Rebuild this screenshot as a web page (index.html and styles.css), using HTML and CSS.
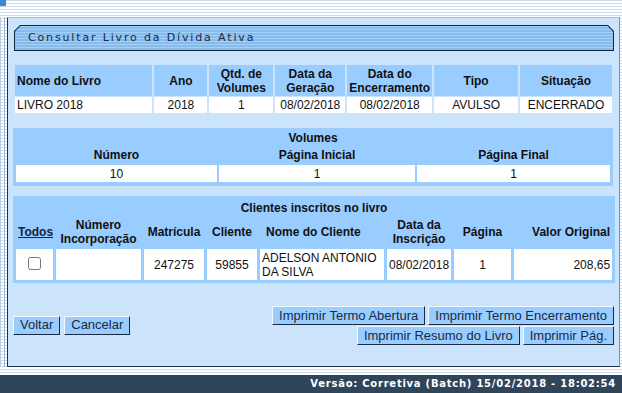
FILE: index.html
```html
<!DOCTYPE html>
<html lang="pt-BR">
<head>
    <meta charset="UTF-8">
    <title>Consultar Livro da Dívida Ativa</title>
    <link rel="stylesheet" href="styles.css">
</head>
<body>
    <div class="page">
        <div class="top-bar"><span class="top-mark"></span></div>
        <div class="main-row">
            <div class="side-strip"></div>
            <div class="panel">
                <div class="title-frame">
                    <div class="title-bar">Consultar Livro da Dívida Ativa</div>
                </div>

                <table class="grid grid-livro">
                    <colgroup>
                        <col style="width:138px"><col style="width:53px"><col style="width:64px">
                        <col style="width:70px"><col style="width:85px"><col style="width:84px"><col style="width:92px">
                    </colgroup>
                    <tr class="head">
                        <th class="left">Nome do Livro</th>
                        <th>Ano</th>
                        <th>Qtd. de<br>Volumes</th>
                        <th>Data da<br>Geração</th>
                        <th>Data do<br>Encerramento</th>
                        <th>Tipo</th>
                        <th>Situação</th>
                    </tr>
                    <tr class="data">
                        <td class="left">LIVRO 2018</td>
                        <td>2018</td>
                        <td>1</td>
                        <td>08/02/2018</td>
                        <td>08/02/2018</td>
                        <td>AVULSO</td>
                        <td>ENCERRADO</td>
                    </tr>
                </table>

                <table class="grid grid-box grid-volumes">
                    <colgroup>
                        <col style="width:201px"><col style="width:196px"><col style="width:193px">
                    </colgroup>
                    <tr class="caption-row"><th colspan="3">Volumes</th></tr>
                    <tr class="head">
                        <th>Número</th>
                        <th>Página Inicial</th>
                        <th>Página Final</th>
                    </tr>
                    <tr class="data">
                        <td>10</td>
                        <td>1</td>
                        <td>1</td>
                    </tr>
                </table>

                <table class="grid grid-box grid-clientes">
                    <colgroup>
                        <col style="width:37px"><col style="width:85px"><col style="width:60px"><col style="width:50px">
                        <col style="width:124px"><col style="width:64px"><col style="width:57px"><col style="width:98px">
                    </colgroup>
                    <tr class="caption-row"><th colspan="8">Clientes inscritos no livro</th></tr>
                    <tr class="head">
                        <th><a class="link-todos" href="#">Todos</a></th>
                        <th>Número<br>Incorporação</th>
                        <th class="wide">Matrícula</th>
                        <th>Cliente</th>
                        <th class="left">Nome do Cliente</th>
                        <th>Data da<br>Inscrição</th>
                        <th>Página</th>
                        <th class="right">Valor Original</th>
                    </tr>
                    <tr class="data">
                        <td><input type="checkbox" class="check"></td>
                        <td></td>
                        <td>247275</td>
                        <td>59855</td>
                        <td class="left">ADELSON ANTONIO DA SILVA</td>
                        <td>08/02/2018</td>
                        <td>1</td>
                        <td class="right">208,65</td>
                    </tr>
                </table>

                <div class="actions">
                    <div class="actions-left">
                        <button class="btn">Voltar</button>
                        <button class="btn">Cancelar</button>
                    </div>
                    <div class="actions-right">
                        <div class="btn-row">
                            <button class="btn">Imprimir Termo Abertura</button>
                            <button class="btn">Imprimir Termo Encerramento</button>
                        </div>
                        <div class="btn-row">
                            <button class="btn">Imprimir Resumo do Livro</button>
                            <button class="btn">Imprimir Pág.</button>
                        </div>
                    </div>
                </div>
            </div>
            <div class="side-strip side-right"></div>
        </div>
        <div class="gap-strip"></div>
        <div class="footer">Versão: Corretiva (Batch) 15/02/2018 - 18:02:54</div>
    </div>
</body>
</html>
```

FILE: styles.css
```css
body {
    margin: 0;
    padding: 0;
    font-family: "Liberation Sans", Arial, sans-serif;
    font-size: 12px;
    background: repeating-linear-gradient(to bottom, #c9dcee 0, #c9dcee 1px, #ffffff 1px, #ffffff 3px);
}
.page {
    width: 622px;
    height: 393px;
    display: flex;
    flex-direction: column;
    overflow: hidden;
}
.top-bar {
    height: 17px;
    flex: none;
}
.top-mark {
    display: block;
    width: 6px;
    height: 6px;
    background-color: #3f86d6;
}
.main-row {
    display: flex;
    height: 350px;
    flex: none;
}
.side-strip {
    width: 7px;
    flex: none;
    border-left: 1px solid #b8cde2;
    box-sizing: border-box;
    background: repeating-linear-gradient(to right, transparent 0, transparent 3px, #9fb8d2 3px, #9fb8d2 4px, transparent 4px, transparent 7px);
}
.side-right {
    width: 2px;
    border-left: none;
}
.panel {
    width: 613px;
    box-sizing: border-box;
    background-color: #cce4fb;
    border-top: 1px solid #a9bed4;
    border-right: 1px solid #7d91a6;
    border-left: 1px solid #22324a;
    border-bottom: 1px solid #22324a;
    padding: 7px 5px 0 5px;
}
.title-frame {
    height: 26px;
    box-sizing: border-box;
    padding: 1px;
    background-color: #17263b;
    clip-path: polygon(6px 0, calc(100% - 6px) 0, 100% 6px, 100% 100%, 0 100%, 0 6px);
    margin-left: 1px;
}
.title-bar {
    height: 100%;
    background: repeating-linear-gradient(to bottom, #a6cff5 0, #a6cff5 1px, #86bbee 1px, #86bbee 3px);
    clip-path: polygon(5.5px 0, calc(100% - 5.5px) 0, 100% 5.5px, 100% 100%, 0 100%, 0 5.5px);
    font-family: "DejaVu Sans", Verdana, sans-serif;
    font-size: 11px;
    letter-spacing: 1.85px;
    color: #1b2b42;
    line-height: 24px;
    padding-left: 13px;
}
.grid {
    table-layout: fixed;
    border-collapse: separate;
    color: #111;
}
.grid th,
.grid td {
    padding: 0 2px;
    text-align: center;
}
.grid th {
    font-weight: bold;
    line-height: 14px;
}
.grid .left { text-align: left; }
.grid .right { text-align: right; }
.grid-livro {
    border-spacing: 2px 1px;
    margin: 13px 0 0 0;
}
.grid-livro .head th {
    background-color: #99ccff;
    height: 31px;
}
.grid-livro .data td {
    background-color: #ffffff;
    height: 16px;
    line-height: 14px;
}
.grid-box {
    background-color: #99ccff;
    border-spacing: 2px;
    margin-left: 0;
}
.grid-box .caption-row th {
    height: 14px;
    line-height: 14px;
    padding-top: 1px;
}
.grid-volumes {
    margin-top: 14px;
    width: 600px;
    padding: 0 1px 2px 1px;
}
.grid-volumes .head th {
    height: 16px;
    vertical-align: middle;
}
.grid-volumes .data td {
    background-color: #ffffff;
    height: 17px;
}
.grid-clientes {
    margin-top: 10px;
    width: 601px;
    border-spacing: 3px 2px;
    padding-bottom: 1px;
}
.grid-clientes .caption-row th {
    padding-top: 3px;
}
.grid-clientes .head th {
    height: 30px;
}
.grid-clientes .data td {
    background-color: #ffffff;
    height: 31px;
    line-height: 14px;
}
.grid-clientes .wide { padding: 0; white-space: nowrap; }
.grid-clientes .head .left { padding-left: 6px; }
.grid-clientes .data .left { padding-left: 2px; }
.link-todos {
    color: #13233a;
    text-decoration: underline;
}
.check {
    margin: 0;
    width: 13px;
    height: 13px;
}
.actions {
    display: flex;
    justify-content: space-between;
    align-items: center;
    margin-top: 23px;
}
.actions-left {
    display: flex;
    gap: 4px;
    margin-top: -1px;
}
.actions-right {
    display: flex;
    flex-direction: column;
    align-items: flex-end;
    gap: 1px;
    margin-right: 0;
}
.btn-row {
    display: flex;
    gap: 3px;
}
.btn {
    font-family: "Liberation Sans", Arial, sans-serif;
    font-size: 13px;
    color: #1a2a40;
    background-color: #99ccff;
    border: 1px solid;
    border-color: #f4f9ff #1a2a40 #1a2a40 #f4f9ff;
    height: 19px;
    line-height: 16px;
    padding: 0 6px;
    margin: 0;
    cursor: pointer;
}
.gap-strip {
    height: 8px;
    flex: none;
}
.footer {
    flex: 1;
    background-color: #2f4559;
    color: #ffffff;
    font-family: "DejaVu Sans", Verdana, sans-serif;
    font-weight: bold;
    font-size: 10px;
    letter-spacing: 0.75px;
    text-align: right;
    line-height: 18px;
    padding-right: 6px;
}
```
